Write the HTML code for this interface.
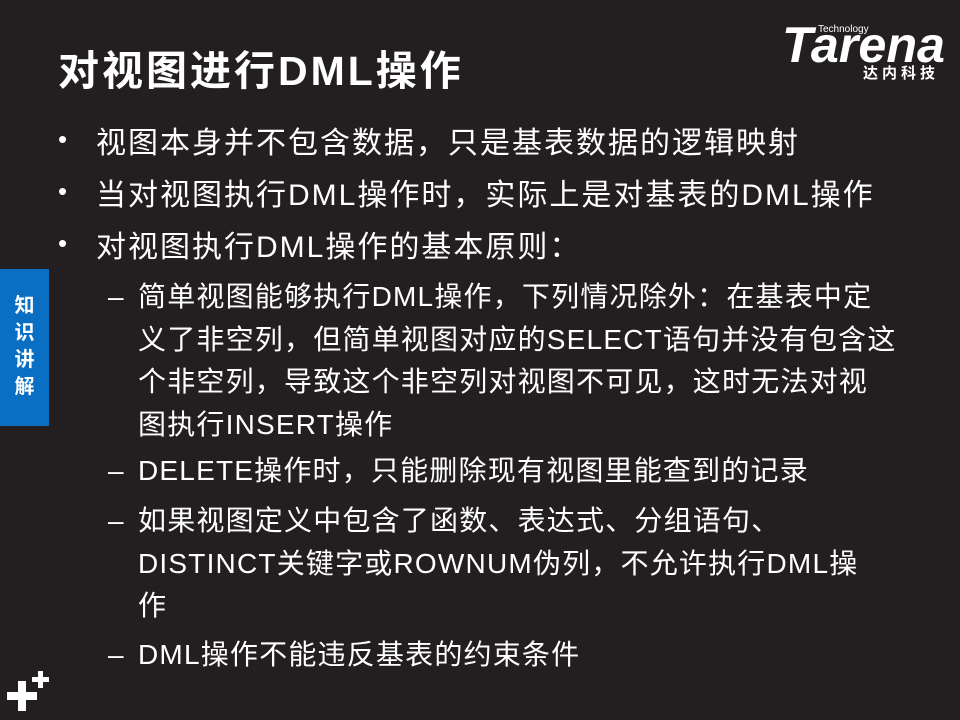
<!DOCTYPE html>
<html><head><meta charset="utf-8"><style>
body{margin:0;width:960px;height:720px;background:#231f20;position:relative;overflow:hidden;font-family:"Liberation Sans","Noto Sans CJK SC",sans-serif;color:#fff}
.a{position:absolute;white-space:nowrap}
h1{position:absolute;left:58px;top:37px;margin:0;font-size:41px;font-weight:bold;letter-spacing:3px}
.b{font-size:30px;left:96px;letter-spacing:2px}
.b:before{content:"•";position:absolute;left:-38px;top:6px;font-size:26px}
.s{font-size:28px;left:138px;line-height:42.5px;letter-spacing:1.2px}
.s:before{content:"–";position:absolute;left:-30px}
.tab{position:absolute;left:0;top:269px;width:49px;height:157px;background:#0a6fc2;font-weight:bold;font-size:20px;text-align:center;line-height:27px;padding-top:24px;box-sizing:border-box}
</style></head><body>
<h1>对视图进行DML操作</h1>
<svg class="a" style="left:770px;top:15px" width="190" height="80">
<text x="12" y="47" font-size="50" font-weight="bold" font-style="italic" fill="#fff" textLength="163" lengthAdjust="spacingAndGlyphs" font-family="Liberation Sans">Tarena</text>
<text x="48" y="17" font-size="10" fill="#fff" font-family="Liberation Sans">Technology</text>
<text x="93" y="63" font-size="15" font-weight="bold" fill="#fff" letter-spacing="4" font-family="Noto Sans CJK SC">达内科技</text>
</svg>
<div class="a b" style="top:118px">视图本身并不包含数据，只是基表数据的逻辑映射</div>
<div class="a b" style="top:170px">当对视图执行DML操作时，实际上是对基表的DML操作</div>
<div class="a b" style="top:222px">对视图执行DML操作的基本原则：</div>
<div class="a s" style="top:276px">简单视图能够执行DML操作，下列情况除外：在基表中定<br>义了非空列，但简单视图对应的SELECT语句并没有包含这<br>个非空列，导致这个非空列对视图不可见，这时无法对视<br>图执行INSERT操作</div>
<div class="a s" style="top:450px">DELETE操作时，只能删除现有视图里能查到的记录</div>
<div class="a s" style="top:500px">如果视图定义中包含了函数、表达式、分组语句、<br>DISTINCT关键字或ROWNUM伪列，不允许执行DML操<br>作</div>
<div class="a s" style="top:634px">DML操作不能违反基表的约束条件</div>
<div class="tab">知<br>识<br>讲<br>解</div>
<svg class="a" style="left:0;top:660px" width="60" height="60"><path d="M7 32h30v8H7zM18 21h8v30h-8zM32 17h17v5H32zM38 11h5v17h-5z" fill="#fff"/></svg>
</body></html>
